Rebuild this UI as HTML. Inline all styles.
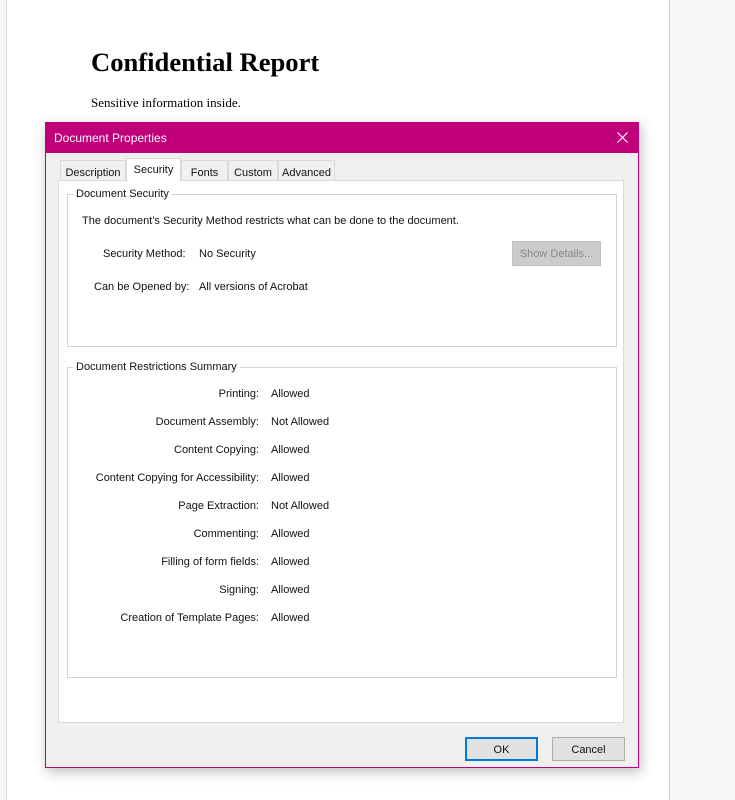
<!DOCTYPE html>
<html><head><style>
*{margin:0;padding:0;box-sizing:border-box}
body{width:735px;height:800px;background:#f7f7f7;position:relative;overflow:hidden;font-family:"Liberation Sans",sans-serif;font-size:11px;color:#111}
.abs{position:absolute}
.page{left:6px;top:0;width:664px;height:800px;background:#fff;border-left:1px solid #ddd;border-right:1px solid #d0d0d0}
h1{position:absolute;left:91px;top:47px;font-family:"Liberation Serif",serif;font-size:26.6px;font-weight:bold;color:#000}
.p{left:91px;top:95px;font-family:"Liberation Serif",serif;font-size:13px;color:#000}
.dlg{left:45px;top:122px;width:594px;height:646px;background:#f0f0f0;border:1px solid #c0007a;box-shadow:2px 4px 12px rgba(0,0,0,.25)}
.title{left:0;top:0;width:592px;height:30px;background:#c0007a;color:#fff;font-size:12px;padding:8px 8px}
.tab{top:37px;height:21px;border:1px solid #d9d9d9;border-bottom:none;background:#f0f0f0;padding:6px 0 0;text-align:center;font-size:11px}
.panel{left:12px;top:57px;width:566px;height:543px;background:#fff;border:1px solid #d9d9d9}
.grp{border:1px solid #d4d4d4}
.lg{background:#fff;padding:0 3px;font-size:11px}
.lbl{width:260px;text-align:right}
.btn{height:24px;background:#e1e1e1;border:1px solid #adadad;text-align:center;padding-top:6px;font-size:11px}
.t{margin-top:1px}
</style></head><body>
<div class="abs page"></div>
<h1>Confidential Report</h1>
<div class="abs p">Sensitive information inside.</div>
<div class="abs dlg">
 <div class="abs title">Document Properties<svg class="abs" style="right:10px;top:9px" width="11" height="11" viewBox="0 0 11 11"><path d="M0.5 0.5L10.5 10.5M10.5 0.5L0.5 10.5" stroke="#fff" stroke-width="1.2"/></svg></div>
 <div class="abs tab" style="left:14px;width:66px">Description</div>
 <div class="abs tab" style="left:80px;width:55px;top:35px;height:24px;background:#fff;z-index:2;padding-top:5px">Security</div>
 <div class="abs tab" style="left:135px;width:47px">Fonts</div>
 <div class="abs tab" style="left:182px;width:50px">Custom</div>
 <div class="abs tab" style="left:232px;width:57px">Advanced</div>
 <div class="abs panel"></div>
 <div class="abs grp" style="left:21px;top:71px;width:550px;height:153px"></div>
 <div class="abs lg" style="left:27px;top:65px">Document Security</div>
 <div class="abs" style="left:36px;top:92px">The document's Security Method restricts what can be done to the document.</div>
 <div class="abs" style="left:57px;top:125px">Security Method:</div>
 <div class="abs" style="left:153px;top:125px">No Security</div>
 <div class="abs" style="left:48px;top:158px">Can be Opened by:</div>
 <div class="abs" style="left:153px;top:158px">All versions of Acrobat</div>
 <div class="abs btn" style="left:466px;top:118px;width:89px;height:25px;background:#ccc;border-color:#bfbfbf;color:#888">Show Details...</div>
 <div class="abs grp" style="left:21px;top:244px;width:550px;height:311px"></div>
 <div class="abs lg" style="left:27px;top:238px">Document Restrictions Summary</div>
 <div class="abs lbl" style="left:-47px;top:265px">Printing:</div><div class="abs" style="left:225px;top:265px">Allowed</div>
 <div class="abs lbl" style="left:-47px;top:293px">Document Assembly:</div><div class="abs" style="left:225px;top:293px">Not Allowed</div>
 <div class="abs lbl" style="left:-47px;top:321px">Content Copying:</div><div class="abs" style="left:225px;top:321px">Allowed</div>
 <div class="abs lbl" style="left:-47px;top:349px">Content Copying for Accessibility:</div><div class="abs" style="left:225px;top:349px">Allowed</div>
 <div class="abs lbl" style="left:-47px;top:377px">Page Extraction:</div><div class="abs" style="left:225px;top:377px">Not Allowed</div>
 <div class="abs lbl" style="left:-47px;top:405px">Commenting:</div><div class="abs" style="left:225px;top:405px">Allowed</div>
 <div class="abs lbl" style="left:-47px;top:433px">Filling of form fields:</div><div class="abs" style="left:225px;top:433px">Allowed</div>
 <div class="abs lbl" style="left:-47px;top:461px">Signing:</div><div class="abs" style="left:225px;top:461px">Allowed</div>
 <div class="abs lbl" style="left:-47px;top:489px">Creation of Template Pages:</div><div class="abs" style="left:225px;top:489px">Allowed</div>
 <div class="abs btn" style="left:419px;top:614px;width:73px;border:2px solid #0078d7;padding-top:5px">OK</div>
 <div class="abs btn" style="left:506px;top:614px;width:73px">Cancel</div>
</div>
</body></html>
